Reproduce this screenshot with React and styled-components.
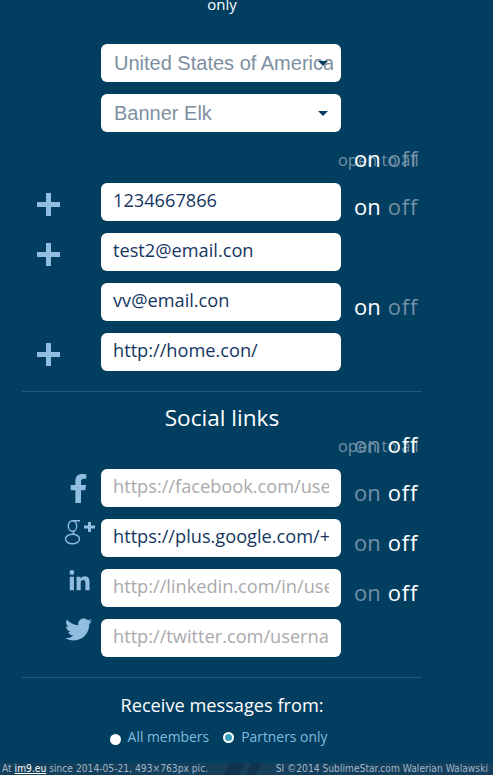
import React from 'react'
import styled, { createGlobalStyle } from 'styled-components'
import { FaFacebookF, FaLinkedinIn, FaTwitter } from 'react-icons/fa'

const GlobalStyle = createGlobalStyle`
  html, body {
    margin: 0;
    padding: 0;
    height: 100%;
    overflow: hidden;
    background: #023e5f;
  }
  * {
    box-sizing: border-box;
  }
`

const Page = styled.div`
  width: 493px;
  height: 775px;
  overflow: hidden;
  display: flex;
  flex-direction: column;
  background: #023e5f;
  color: #fff;
  font-family: 'Open Sans', 'Noto Sans', sans-serif;
`

const Content = styled.div`
  flex: 1;
  min-height: 0;
  padding: 0 71px 0 22px;
`

const Only = styled.div`
  height: 50px;
  margin-top: -6px;
  text-align: center;
  font-size: 15px;
  line-height: 20px;
`

const Row = styled.div`
  display: grid;
  grid-template-columns: 79px 240px auto;
  grid-template-rows: 38px;
  height: 38px;
  margin-bottom: 12px;
  align-items: center;
`

const Field = styled.div`
  position: relative;
  grid-column: 2;
  height: 38px;
  padding: 0 12px;
  border-radius: 6px;
  background: #fff;
  font-size: 18.2px;
  line-height: 35px;
  color: ${props => (props.$empty ? '#aaa9ad' : '#15365f')};
`

const FieldText = styled.div`
  overflow: hidden;
  white-space: nowrap;
`

const SelectField = styled(Field)`
  padding: 0 8px 0 13px;
  font-family: 'Liberation Sans', Arial, sans-serif;
  font-size: 20px;
  line-height: 38px;
  color: #7d8fa1;
`

const Caret = styled.span`
  position: absolute;
  top: 17px;
  right: 13px;
  border-style: solid;
  border-width: 5px 5px 0;
  border-color: #023e5f transparent transparent;
`

const Add = styled.div`
  grid-column: 1;
  justify-self: start;
  margin: 4px 0 0 15px;
  position: relative;
  width: 23px;
  height: 23px;
  &::before,
  &::after {
    content: '';
    position: absolute;
    background: #90bde0;
  }
  &::before {
    left: 0;
    right: 0;
    top: 9px;
    height: 5px;
  }
  &::after {
    top: 0;
    bottom: 0;
    left: 9px;
    width: 5px;
  }
`

const IconSlot = styled.div`
  grid-column: 1;
  justify-self: end;
  display: flex;
  justify-content: center;
  width: 36px;
  margin-right: ${props => props.$right ?? 3}px;
  margin-bottom: ${props => props.$lift || 0}px;
  color: #90bde0;
`

const Toggle = styled.div`
  display: flex;
  gap: 7px;
  margin: 8px 0 0 13px;
  font-size: 22px;
  line-height: 30px;
`

const ToggleWord = styled.span`
  color: ${props => (props.$active ? '#fff' : '#7290a6')};
  font-weight: ${props => (props.$active ? 500 : 400)};
  letter-spacing: ${props => (props.$wide ? '0.8px' : '0')};
`

const HeaderToggles = styled.div`
  position: relative;
  height: 39px;
  margin-left: 316px;
`

const OpenToAll = styled.span`
  position: absolute;
  top: 5px;
  left: 0;
  font-size: 16.4px;
  line-height: 22px;
  color: #7290a6;
  white-space: nowrap;
`

const HeaderWords = styled(Toggle)`
  position: absolute;
  top: -1px;
  left: 16px;
  margin: 0;
`

const Divider = styled.hr`
  margin: 20px 0 0;
  width: 400px;
  height: 1px;
  border: 0;
  background: #1e5a7c;
`

const SectionTitle = styled.h2`
  margin: 0;
  height: 38px;
  padding-top: 11px;
  width: 400px;
  text-align: center;
  font-size: 22.6px;
  line-height: 30px;
  font-weight: 400;
`

const ReceiveTitle = styled.div`
  width: 400px;
  margin-top: 15px;
  text-align: center;
  font-size: 18.2px;
  line-height: 24px;
`

const RadioRow = styled.div`
  width: 400px;
  margin-top: 9px;
  padding-right: 7px;
  display: flex;
  justify-content: center;
  gap: 14px;
  font-size: 13.9px;
  line-height: 22px;
  color: #7fbde0;
`

const RadioOption = styled.label`
  display: flex;
  align-items: center;
  gap: 7px;
`

const RadioDot = styled.span`
  width: 11px;
  height: 11px;
  margin-top: ${props => (props.$checked ? 0 : 4)}px;
  border-radius: 50%;
  background: ${props => (props.$checked ? '#3a9fb8' : '#fff')};
  border: ${props => (props.$checked ? '2px solid #fff' : 'none')};
`

const Footer = styled.div`
  height: 12px;
  flex: none;
  display: flex;
  justify-content: space-between;
  padding: 0 5px 0 2px;
  background: linear-gradient(
      115deg,
      transparent 0 208px,
      #0e3450 208px 222px,
      transparent 222px 228px,
      #0e3450 228px 237px,
      transparent 237px
    ),
    #163f5b;
  color: #9db8cb;
  font-family: 'DejaVu Sans', sans-serif;
  font-stretch: condensed;
  font-size: 10.2px;
  line-height: 12px;
  white-space: nowrap;
`

const FooterLink = styled.a`
  color: #fff;
  text-decoration: underline;
`

function GooglePlus() {
  return (
    <svg width="32" height="26" viewBox="0 0 32 26" fill="none" stroke="currentColor" strokeWidth="1.4">
      <ellipse cx="8.500" cy="7" rx="4.200" ry="5.300" />
      <ellipse cx="8.500" cy="20" rx="7" ry="4.800" />
      <path d="M8.500 1.700h7.500M10.500 12c-2.500 1.800-1 3 .8 3.600" />
      <path d="M20 8h11M25.500 3v10" strokeWidth="3" />
    </svg>
  )
}

function OnOff({ on }) {
  return (
    <Toggle>
      <ToggleWord $active={on}>on</ToggleWord>
      <ToggleWord $active={!on} $wide>
        off
      </ToggleWord>
    </Toggle>
  )
}

function SelectBox({ children }) {
  return (
    <SelectField>
      <FieldText>{children}</FieldText>
      <Caret />
    </SelectField>
  )
}

function TextBox({ empty, children }) {
  return (
    <Field $empty={empty}>
      <FieldText>{children}</FieldText>
    </Field>
  )
}

export default function App() {
  return (
    <Page>
      <GlobalStyle />
      <Content>
        <Only>only</Only>
        <Row>
          <SelectBox>United States of America</SelectBox>
        </Row>
        <Row>
          <SelectBox>Banner Elk</SelectBox>
        </Row>
        <HeaderToggles>
          <OpenToAll>open to all</OpenToAll>
          <HeaderWords>
            <ToggleWord $active>on</ToggleWord>
            <ToggleWord $wide>off</ToggleWord>
          </HeaderWords>
        </HeaderToggles>
        <Row>
          <Add />
          <TextBox>1234667866</TextBox>
          <OnOff on />
        </Row>
        <Row>
          <Add />
          <TextBox>test2@email.con</TextBox>
        </Row>
        <Row>
          <TextBox>vv@email.con</TextBox>
          <OnOff on />
        </Row>
        <Row>
          <Add />
          <TextBox>http://home.con/</TextBox>
        </Row>
        <Divider />
        <SectionTitle>Social links</SectionTitle>
        <HeaderToggles>
          <OpenToAll>open to all</OpenToAll>
          <HeaderWords>
            <ToggleWord>on</ToggleWord>
            <ToggleWord $active $wide>
              off
            </ToggleWord>
          </HeaderWords>
        </HeaderToggles>
        <Row>
          <IconSlot $right={5}>
            <FaFacebookF size={29} />
          </IconSlot>
          <TextBox empty>https://facebook.com/username</TextBox>
          <OnOff />
        </Row>
        <Row>
          <IconSlot $lift={13}>
            <GooglePlus />
          </IconSlot>
          <TextBox>https://plus.google.com/+username</TextBox>
          <OnOff />
        </Row>
        <Row>
          <IconSlot $lift={14} $right={4}>
            <FaLinkedinIn size={23} />
          </IconSlot>
          <TextBox empty>http://linkedin.com/in/username</TextBox>
          <OnOff />
        </Row>
        <Row>
          <IconSlot $lift={18} $right={5}>
            <FaTwitter size={27} />
          </IconSlot>
          <TextBox empty>http://twitter.com/username</TextBox>
        </Row>
        <Divider />
        <ReceiveTitle>Receive messages from:</ReceiveTitle>
        <RadioRow>
          <RadioOption>
            <RadioDot />
            All members
          </RadioOption>
          <RadioOption>
            <RadioDot $checked />
            Partners only
          </RadioOption>
        </RadioRow>
      </Content>
      <Footer>
        <span>
          At <FooterLink>im9.eu</FooterLink> since 2014-05-21, 493×763px pic.
        </span>
        <span>SI ©2014 SublimeStar.com Walerian Walawski</span>
      </Footer>
    </Page>
  )
}
